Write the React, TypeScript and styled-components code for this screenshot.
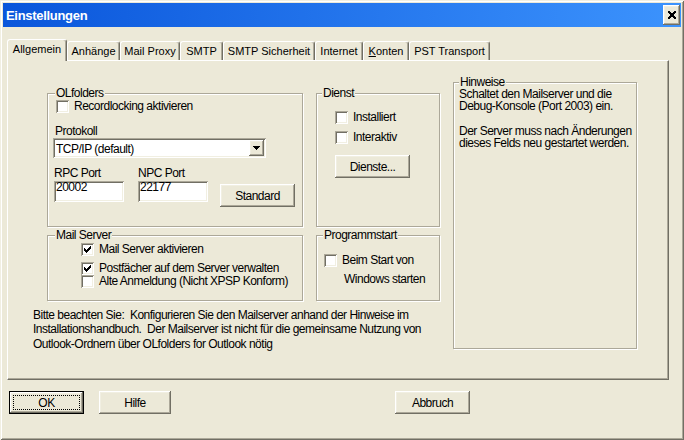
import React from 'react';
import styled, { createGlobalStyle } from 'styled-components';

const FACE = '#ECE9D8';
const LIGHT = '#F1EFE2';
const SHADOW = '#ACA899';
const DARK = '#716F64';

const UI_FONT = `"Liberation Sans", Arial, sans-serif`;
const TAB_FONT = `"Liberation Sans", Arial, sans-serif`;

const RAISED = `inset -1px -1px 0 ${DARK}, inset 1px 1px 0 #fff, inset -2px -2px 0 ${SHADOW}, inset 2px 2px 0 ${LIGHT}`;
const SUNKEN = `inset 1px 1px 0 ${SHADOW}, inset -1px -1px 0 #fff, inset 2px 2px 0 ${DARK}, inset -2px -2px 0 ${LIGHT}`;

const GlobalStyle = createGlobalStyle`
  html, body {
    margin: 0;
    padding: 0;
    background: ${FACE};
  }
  body {
    width: 684px;
    height: 440px;
    overflow: hidden;
  }
  * {
    box-sizing: border-box;
  }
`;

const Window = styled.div`
  width: 684px;
  height: 440px;
  padding: 3px;
  display: flex;
  flex-direction: column;
  background: ${FACE};
  box-shadow: inset 1px 1px 0 ${LIGHT}, inset -1px -1px 0 ${DARK}, inset 2px 2px 0 #fff, inset -2px -2px 0 ${SHADOW};
  font-family: ${UI_FONT};
  font-size: 12px;
  letter-spacing: -0.5px;
  color: #000;
`;

const TitleBar = styled.div`
  height: 24px;
  display: flex;
  align-items: center;
  justify-content: space-between;
  padding: 0 1px 0 3px;
  background: linear-gradient(90deg, #0A56DB 0%, #3C93FD 100%);
`;

const Title = styled.span`
  color: #fff;
  font-family: ${TAB_FONT};
  font-weight: bold;
  font-size: 13px;
  letter-spacing: -0.3px;
`;

const CloseButton = styled.button`
  width: 17px;
  height: 20px;
  margin: 0;
  padding: 0;
  border: 0;
  background: ${FACE};
  box-shadow: ${RAISED};
  display: flex;
  align-items: center;
  justify-content: center;
`;

const Body = styled.div`
  display: flex;
  flex-direction: column;
  padding: 12px 0 0 4px;
`;

const TabStrip = styled.div`
  display: flex;
  align-items: flex-end;
  height: 21px;
  position: relative;
  z-index: 1;
`;

const Tab = styled.div<{ $active?: boolean; $w: number }>`
  width: ${p => p.$w}px;
  height: ${p => (p.$active ? 22 : 19)}px;
  margin-bottom: ${p => (p.$active ? -1 : 0)}px;
  padding-top: 3px;
  text-align: center;
  font-family: ${TAB_FONT};
  font-size: 11px;
  letter-spacing: 0;
  line-height: 13px;
  background: ${FACE};
  border-top: 1px solid #fff;
  border-left: 1px solid #fff;
  border-right: 1px solid ${DARK};
  box-shadow: inset -1px 0 0 ${SHADOW};
  border-radius: 3px 3px 0 0;
`;

const Panel = styled.div`
  width: 662px;
  height: 320px;
  padding: 15px 0 0 25px;
  border-top: 1px solid #fff;
  border-left: 1px solid #fff;
  border-right: 1px solid ${DARK};
  border-bottom: 1px solid ${DARK};
  box-shadow: inset -1px -1px 0 ${SHADOW};
  display: grid;
  grid-template-columns: 14px 256px 13px 124px 13px 184px;
  grid-template-rows: 151px 74px auto;
  grid-template-areas:
    ". ol . di . hw"
    ". ms . ps . hw"
    "nt nt nt nt . hw";
`;

const Group = styled.fieldset<{ $area: string; $h: number; $pad: number }>`
  grid-area: ${p => p.$area};
  align-self: ${p => (p.$area === 'hw' ? 'start' : 'end')};
  height: ${p => p.$h}px;
  min-width: 0;
  margin: 0;
  padding: 0 0 0 ${p => p.$pad}px;
  border: 1px solid ${SHADOW};
  box-shadow: inset 1px 1px 0 #fff, 1px 1px 0 #fff;
`;

const Legend = styled.legend`
  padding: 0 1px;
  line-height: 12px;
  background: ${FACE};
  position: relative;
`;

const CheckRow = styled.label<{ $top: number; $left: number }>`
  display: flex;
  align-items: center;
  gap: 5px;
  height: 13px;
  margin: ${p => p.$top}px 0 0 ${p => p.$left}px;
  line-height: 13px;
  white-space: nowrap;
`;

const Box = styled.span`
  width: 13px;
  height: 13px;
  flex: none;
  background: #fff;
  box-shadow: ${SUNKEN};
  display: flex;
  align-items: center;
  justify-content: center;
`;

const Caption = styled.div<{ $top?: number; $left?: number }>`
  margin: ${p => p.$top ?? 0}px 0 0 ${p => p.$left ?? 0}px;
  line-height: 14px;
  white-space: nowrap;
`;

const Combo = styled.div`
  width: 213px;
  height: 20px;
  margin-left: -2px;
  padding: 2px;
  display: flex;
  align-items: center;
  background: #fff;
  box-shadow: ${SUNKEN};
`;

const ComboText = styled.span`
  flex: 1;
  padding: 1px 0 0 1px;
  line-height: 14px;
`;

const DropButton = styled.span`
  width: 15px;
  height: 16px;
  background: ${FACE};
  box-shadow: ${RAISED};
  display: flex;
  align-items: center;
  justify-content: center;
`;

const PortsRow = styled.div`
  display: flex;
  align-items: flex-start;
  gap: 14px;
  margin: 8px 0 0 -1px;
`;

const PortField = styled.div`
  display: flex;
  flex-direction: column;
  gap: 1px;
`;

const TextBox = styled.input`
  width: 70px;
  height: 21px;
  margin: 0;
  padding: 0 0 9px 2px;
  border: 0;
  outline: none;
  background: #fff;
  box-shadow: ${SUNKEN};
  font: inherit;
  letter-spacing: inherit;
  color: #000;
`;

const PushButton = styled.button<{ $w: number; $mt?: number; $ml?: number; $default?: boolean }>`
  width: ${p => p.$w}px;
  height: 23px;
  margin: ${p => p.$mt ?? 0}px 0 0 ${p => p.$ml ?? 0}px;
  padding: 0;
  border: ${p => (p.$default ? '1px solid #000' : '0')};
  background: ${FACE};
  box-shadow: ${RAISED};
  font: inherit;
  letter-spacing: inherit;
  color: #000;
  outline: ${p => (p.$default ? '1px dotted #000' : 'none')};
  outline-offset: -5px;
`;

const Note = styled.div`
  grid-area: nt;
  margin-top: 6.5px;
  line-height: 14.5px;
  white-space: pre;
`;

const HintText = styled.p<{ $top: number }>`
  margin: ${p => p.$top}px 0 0;
  line-height: 11.5px;
  white-space: pre;
`;

const ButtonRow = styled.div`
  display: flex;
  gap: 15px;
  margin-top: 11px;
  padding-left: 2px;
`;

const CheckMark = () => (
  <svg width="7" height="7" viewBox="0 0 7 7" shapeRendering="crispEdges">
    <path
      fill="#000"
      d="M6 0h1v1H6z M5 1h2v1H5z M0 2h1v1H0z M4 2h3v1H4z M0 3h2v1H0z M3 3h3v1H3z M0 4h5v1H0z M1 5h3v1H1z M2 6h1v1H2z"
    />
  </svg>
);

const CheckBox = ({ checked }: { checked?: boolean }) => <Box>{checked && <CheckMark />}</Box>;

const tabs: { label: React.ReactNode; w: number; active?: boolean }[] = [
  { label: 'Allgemein', w: 60, active: true },
  { label: 'Anhänge', w: 53 },
  { label: 'Mail Proxy', w: 60 },
  { label: 'SMTP', w: 43 },
  { label: 'SMTP Sicherheit', w: 92 },
  { label: 'Internet', w: 48 },
  { label: <><u>K</u>onten</>, w: 46 },
  { label: 'PST Transport', w: 81 },
];

export default function App() {
  return (
    <>
      <GlobalStyle />
      <Window>
        <TitleBar>
          <Title>Einstellungen</Title>
          <CloseButton aria-label="Schließen">
            <svg width="8" height="8" viewBox="0 0 8 8" shapeRendering="crispEdges">
              <path
                fill="#000"
                d="M0 0h2v1H0z M6 0h2v1H6z M0 1h3v1H0z M5 1h3v1H5z M1 2h6v1H1z M2 3h4v2H2z M1 5h6v1H1z M0 6h3v1H0z M5 6h3v1H5z M0 7h2v1H0z M6 7h2v1H6z"
              />
            </svg>
          </CloseButton>
        </TitleBar>

        <Body>
          <TabStrip>
            {tabs.map((t, i) => (
              <Tab key={i} $w={t.w} $active={t.active}>
                {t.label}
              </Tab>
            ))}
          </TabStrip>

          <Panel>
            <Group $area="ol" $h={140} $pad={7}>
              <Legend>OLfolders</Legend>
              <CheckRow $top={1} $left={1}>
                <CheckBox />
                Recordlocking aktivieren
              </CheckRow>
              <Caption $top={11}>Protokoll</Caption>
              <Combo>
                <ComboText>TCP/IP (default)</ComboText>
                <DropButton>
                  <svg width="7" height="4" viewBox="0 0 7 4" shapeRendering="crispEdges">
                    <path fill="#000" d="M0 0h7v1H0z M1 1h5v1H1z M2 2h3v1H2z M3 3h1v1H3z" />
                  </svg>
                </DropButton>
              </Combo>
              <PortsRow>
                <PortField>
                  <Caption>RPC Port</Caption>
                  <TextBox defaultValue="20002" />
                </PortField>
                <PortField>
                  <Caption>NPC Port</Caption>
                  <TextBox defaultValue="22177" />
                </PortField>
                <PushButton $w={75} $mt={18} $ml={-2}>
                  Standard
                </PushButton>
              </PortsRow>
            </Group>

            <Group $area="di" $h={140} $pad={5}>
              <Legend>Dienst</Legend>
              <CheckRow $top={12} $left={13}>
                <CheckBox />
                Installiert
              </CheckRow>
              <CheckRow $top={7} $left={13}>
                <CheckBox />
                Interaktiv
              </CheckRow>
              <PushButton $w={75} $mt={11} $ml={13}>
                Dienste...
              </PushButton>
            </Group>

            <Group $area="ms" $h={72} $pad={7}>
              <Legend>Mail Server</Legend>
              <CheckRow $top={2} $left={26}>
                <CheckBox checked />
                Mail Server aktivieren
              </CheckRow>
              <CheckRow $top={6} $left={26}>
                <CheckBox checked />
                Postfächer auf dem Server verwalten
              </CheckRow>
              <CheckRow $top={0} $left={26}>
                <CheckBox />
                Alte Anmeldung (Nicht XPSP Konform)
              </CheckRow>
            </Group>

            <Group $area="ps" $h={72} $pad={6}>
              <Legend>Programmstart</Legend>
              <CheckRow $top={13} $left={1}>
                <CheckBox />
                Beim Start von
              </CheckRow>
              <Caption $top={5} $left={21}>
                Windows starten
              </Caption>
            </Group>

            <Note>
              {'Bitte beachten Sie:  Konfigurieren Sie den Mailserver anhand der Hinweise im\n' +
                'Installationshandbuch.  Der Mailserver ist nicht für die gemeinsame Nutzung von\n' +
                'Outlook-Ordnern über OLfolders for Outlook nötig'}
            </Note>

            <Group $area="hw" $h={273} $pad={5}>
              <Legend>Hinweise</Legend>
              <HintText $top={1}>{'Schaltet den Mailserver und die\nDebug-Konsole (Port 2003) ein.'}</HintText>
              <HintText $top={14}>{'Der Server muss nach Änderungen\ndieses Felds neu gestartet werden.'}</HintText>
            </Group>
          </Panel>

          <ButtonRow>
            <PushButton $w={75} $default>
              OK
            </PushButton>
            <PushButton $w={72}>Hilfe</PushButton>
            <PushButton $w={75} $ml={209}>
              Abbruch
            </PushButton>
          </ButtonRow>
        </Body>
      </Window>
    </>
  );
}
